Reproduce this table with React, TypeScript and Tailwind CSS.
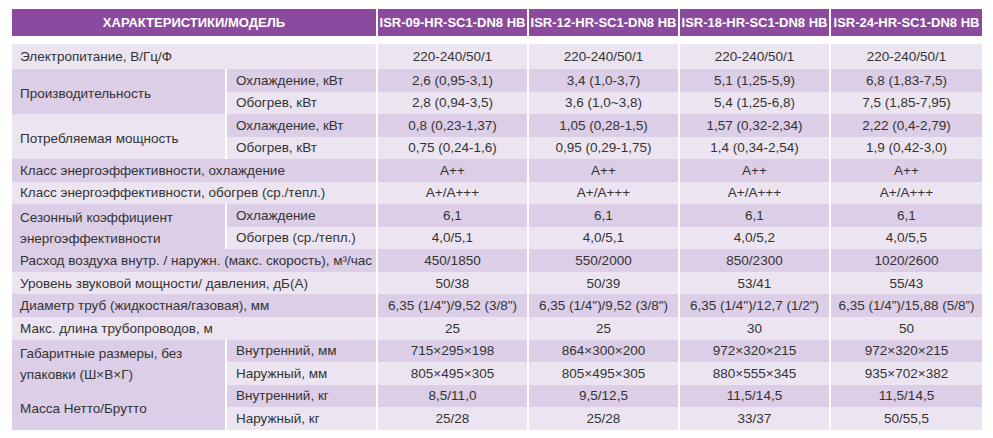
const models = [
  "ISR-09-HR-SC1-DN8 HB",
  "ISR-12-HR-SC1-DN8 HB",
  "ISR-18-HR-SC1-DN8 HB",
  "ISR-24-HR-SC1-DN8 HB",
];

type Row = {
  group?: React.ReactNode;
  span?: number;
  groupDark?: boolean;
  label?: string;
  full?: string;
  values: string[];
};

const rows: Row[] = [
  { full: "Электропитание, В/Гц/Ф", values: ["220-240/50/1", "220-240/50/1", "220-240/50/1", "220-240/50/1"] },
  { group: "Производительность", span: 2, groupDark: true, label: "Охлаждение, кВт", values: ["2,6 (0,95-3,1)", "3,4 (1,0-3,7)", "5,1 (1,25-5,9)", "6,8 (1,83-7,5)"] },
  { label: "Обогрев, кВт", values: ["2,8 (0,94-3,5)", "3,6 (1,0~3,8)", "5,4 (1,25-6,8)", "7,5 (1,85-7,95)"] },
  { group: "Потребляемая мощность", span: 2, groupDark: false, label: "Охлаждение, кВт", values: ["0,8 (0,23-1,37)", "1,05 (0,28-1,5)", "1,57 (0,32-2,34)", "2,22 (0,4-2,79)"] },
  { label: "Обогрев, кВт", values: ["0,75 (0,24-1,6)", "0,95 (0,29-1,75)", "1,4 (0,34-2,54)", "1,9 (0,42-3,0)"] },
  { full: "Класс энергоэффективности, охлаждение", values: ["A++", "A++", "A++", "A++"] },
  { full: "Класс энергоэффективности, обогрев (ср./тепл.)", values: ["A+/A+++", "A+/A+++", "A+/A+++", "A+/A+++"] },
  {
    group: (
      <>
        Сезонный коэффициент
        <br />
        энергоэффективности
      </>
    ),
    span: 2,
    groupDark: true,
    label: "Охлаждение",
    values: ["6,1", "6,1", "6,1", "6,1"],
  },
  { label: "Обогрев (ср./тепл.)", values: ["4,0/5,1", "4,0/5,1", "4,0/5,2", "4,0/5,5"] },
  { full: "Расход воздуха внутр. / наружн. (макс. скорость), м³/час", values: ["450/1850", "550/2000", "850/2300", "1020/2600"] },
  { full: "Уровень звуковой мощности/ давления, дБ(A)", values: ["50/38", "50/39", "53/41", "55/43"] },
  {
    full: "Диаметр труб (жидкостная/газовая), мм",
    values: ['6,35 (1/4")/9,52 (3/8")', '6,35 (1/4")/9,52 (3/8")', '6,35 (1/4")/12,7 (1/2")', "6,35 (1/4”)/15,88 (5/8”)"],
  },
  { full: "Макс. длина трубопроводов, м", values: ["25", "25", "30", "50"] },
  {
    group: (
      <>
        Габаритные размеры, без
        <br />
        упаковки (Ш×В×Г)
      </>
    ),
    span: 2,
    groupDark: true,
    label: "Внутренний, мм",
    values: ["715×295×198", "864×300×200", "972×320×215", "972×320×215"],
  },
  { label: "Наружный, мм", values: ["805×495×305", "805×495×305", "880×555×345", "935×702×382"] },
  { group: "Масса Нетто/Брутто", span: 2, groupDark: true, label: "Внутренний, кг", values: ["8,5/11,0", "9,5/12,5", "11,5/14,5", "11,5/14,5"] },
  { label: "Наружный, кг", values: ["25/28", "25/28", "33/37", "50/55,5"] },
];

const dark = "bg-[#dccee6]";
const light = "bg-[#ece5f1]";

export default function App() {
  return (
    <div className="h-[438px] w-[993px] bg-white pl-3 pt-[9px] text-[#333333] [font-family:'Liberation_Sans',Arial,sans-serif]">
      <table className="w-[970px] table-fixed border-collapse text-[13.5px]">
        <colgroup>
          <col className="w-[214px]" />
          <col className="w-[151px]" />
          <col className="w-[151px]" />
          <col className="w-[151px]" />
          <col className="w-[151px]" />
          <col className="w-[152px]" />
        </colgroup>
        <thead>
          <tr className="h-[27px] bg-[#8b4a9d] text-[13px] font-bold text-white">
            <th colSpan={2} className="border-r-2 border-white pt-px text-center font-bold">
              ХАРАКТЕРИСТИКИ/МОДЕЛЬ
            </th>
            {models.map((m, i) => (
              <th
                key={m}
                className={`whitespace-nowrap pt-px text-center font-bold ${i < 3 ? "border-r-2 border-white" : ""}`}
              >
                {m}
              </th>
            ))}
          </tr>
          <tr className="h-2">
            <td colSpan={6} />
          </tr>
        </thead>
        <tbody>
          {rows.map((r, idx) => {
            const bg = idx % 2 === 1 ? dark : light;
            return (
              <tr key={idx} className={`${idx === 0 ? "h-[25px]" : "h-[22.56px]"} ${bg}`}>
                {r.full ? (
                  <td colSpan={2} className="whitespace-nowrap border-r-2 border-white pl-2 pt-px">
                    {r.full}
                  </td>
                ) : null}
                {r.group ? (
                  <td
                    rowSpan={r.span}
                    className={`border-r-2 border-white pl-2 pt-[3px] leading-[21px] ${r.groupDark ? dark : light}`}
                  >
                    {r.group}
                  </td>
                ) : null}
                {r.label ? (
                  <td className="whitespace-nowrap border-r-2 border-white pl-[9px] pt-px">{r.label}</td>
                ) : null}
                {r.values.map((v, i) => (
                  <td
                    key={i}
                    className={`whitespace-nowrap pt-px text-center ${i < 3 ? "border-r-2 border-white" : ""}`}
                  >
                    {v}
                  </td>
                ))}
              </tr>
            );
          })}
        </tbody>
      </table>
    </div>
  );
}
